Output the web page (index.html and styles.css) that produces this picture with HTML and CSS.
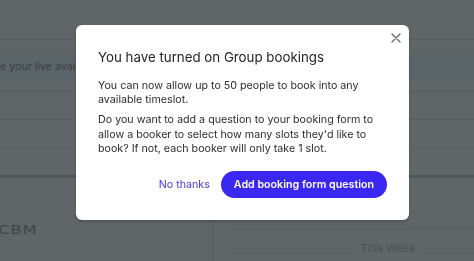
FILE: index.html
```html
<!DOCTYPE html>
<html>
<head>
<meta charset="utf-8">
<link rel="stylesheet" href="styles.css">
</head>
<body>
<div class="page">
  <div class="top"></div>
  <div class="row gap1"></div>
  <div class="band"><span class="band-text">e your live availability in the calendar below</span></div>
  <div class="row r2"></div>
  <div class="row r3"></div>
  <div class="row r4a"></div>
  <div class="row r4b"></div>
  <div class="green"></div>
  <div class="lower">
    <div class="left-col"><span class="logo">CBM</span></div>
    <div class="right-col">
      <div class="rline l1"></div>
      <div class="week"><span class="wline first"></span><span class="week-text">This Week</span><span class="wline"></span></div>
    </div>
  </div>
</div>
<div class="overlay">
  <div class="modal">
    <button class="close" aria-label="Close">
      <svg width="10" height="10" viewBox="0 0 10 10"><path d="M1 1L9 9M9 1L1 9" stroke="#6b6b6b" stroke-width="1.4" stroke-linecap="round"/></svg>
    </button>
    <h2 class="title">You have turned on Group bookings</h2>
    <p class="text">You can now allow up to 50 people to book into any available timeslot.</p>
    <p class="text">Do you want to add a question to your booking form to allow a booker to select how many slots they'd like to book? If not, each booker will only take 1 slot.</p>
    <div class="actions">
      <button class="link-btn">No thanks</button>
      <button class="primary-btn">Add booking form question</button>
    </div>
  </div>
</div>
</body>
</html>
```
FILE: styles.css
```css
* { box-sizing: border-box; }
html, body { margin: 0; padding: 0; }
body {
  width: 474px;
  height: 261px;
  overflow: hidden;
  background: #606667;
  font-family: Inter, "Noto Sans", sans-serif;
}
.page {
  display: flex;
  flex-direction: column;
  height: 261px;
}
.top { height: 40px; border-bottom: 1px solid #585e5f; }
.gap1 { height: 12px; }
.band {
  height: 28px;
  background: #5b6469;
  display: flex;
  align-items: center;
  overflow: hidden;
  white-space: nowrap;
}
.band-text {
  margin-left: 0;
  font-size: 10.7px;
  color: #3a4042;
}
.r2 { height: 12px; border-bottom: 1px solid #585e5f; }
.r3 { height: 28px; border-bottom: 1px solid #585e5f; }
.r4a { height: 28px; border-bottom: 1px solid #5c6263; }
.r4b { height: 27px; }
.green { height: 3px; background: #4b5a57; }
.lower { display: flex; flex: 1; }
.left-col {
  width: 213px;
  border-right: 1px solid #5a6061;
  padding-top: 44px;
}
.logo {
  display: block;
  margin-left: -2px;
  font-family: "DejaVu Sans", sans-serif;
  font-size: 12.5px;
  letter-spacing: 0.8px;
  color: #3e4445;
  transform: scaleX(1.3);
  transform-origin: left;
}
.right-col { flex: 1; padding-left: 17px; padding-top: 51px; }
.rline { height: 1px; background: #5a6061; }
.week { display: flex; align-items: center; margin-top: 11px; }
.wline { flex: 1; height: 1px; background: #5a6061; }
.wline.first { flex: 0 0 120px; }
.week-text {
  padding: 0 11px;
  font-size: 11px;
  color: #4b5152;
}
.overlay {
  position: fixed;
  inset: 0;
  display: flex;
  align-items: flex-start;
  justify-content: flex-start;
  padding: 25px 0 0 76px;
}
.modal {
  position: relative;
  width: 333px;
  height: 195px;
  background: #ffffff;
  border-radius: 6px;
  padding: 23px 22px 22px 22px;
  box-shadow: 0 2px 3px rgba(0,0,0,0.2);
  display: flex;
  flex-direction: column;
}
.close {
  position: absolute;
  top: 8px;
  right: 8px;
  width: 10px;
  height: 10px;
  padding: 0;
  border: 0;
  background: none;
  display: flex;
}
.title {
  margin: 0 0 13px 0;
  font-size: 13.3px;
  font-weight: 400;
  line-height: 18px;
  color: #242424;
}
.text {
  margin: 0 0 5.6px 0;
  font-size: 10.7px;
  line-height: 14.4px;
  color: #2c2c2c;
}
.actions {
  margin-top: auto;
  display: flex;
  justify-content: flex-end;
  align-items: center;
  gap: 11px;
}
.link-btn {
  border: 0;
  background: none;
  padding: 0;
  font-family: inherit;
  font-size: 10.7px;
  color: #4a35e8;
}
.primary-btn {
  border: 0;
  height: 27px;
  padding: 0 13px;
  border-radius: 14px;
  background: #3a27f2;
  color: #ffffff;
  font-family: inherit;
  font-size: 10.7px;
  font-weight: 600;
}
```
